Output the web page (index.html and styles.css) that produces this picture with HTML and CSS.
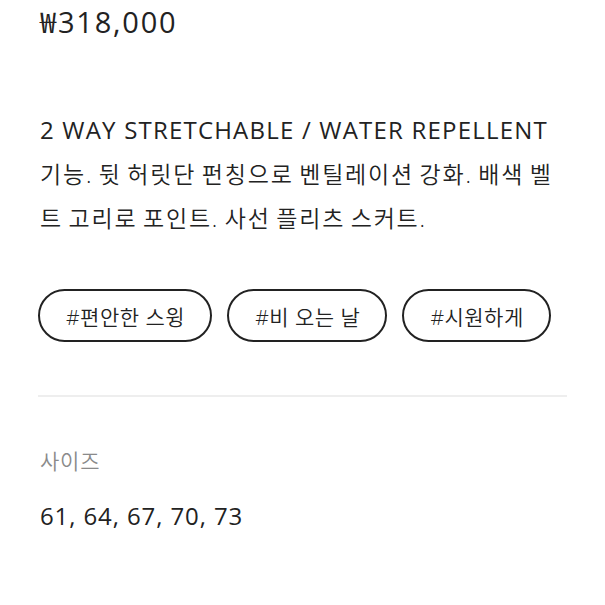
FILE: index.html
```html
<!DOCTYPE html>
<html lang="ko">
<head>
<meta charset="utf-8">
<link rel="stylesheet" href="styles.css">
</head>
<body>
<main class="page">
  <div class="price">₩318,000</div>
  <p class="desc"><span class="en">2 WAY STRETCHABLE / WATER REPELLENT</span> 기능. 뒷 허릿단 펀칭으로 벤틸레이션 강화. 배색 벨트 고리로 포인트. 사선 플리츠 스커트.</p>
  <div class="tags">
    <span class="tag">#편안한 스윙</span>
    <span class="tag">#비 오는 날</span>
    <span class="tag">#시원하게</span>
  </div>
  <hr class="divider">
  <div class="label">사이즈</div>
  <div class="sizes">61, 64, 67, 70, 73</div>
</main>
</body>
</html>
```
FILE: styles.css
```css
html, body {
  margin: 0;
  padding: 0;
  background: #fff;
}
body {
  font-family: "Open Sans", "Noto Sans CJK KR", sans-serif;
  color: #222;
  font-weight: 350;
}
.page {
  padding: 0 38px 0 40px;
}
.price {
  font-size: 29px;
  font-weight: 400;
  letter-spacing: 1.8px;
  line-height: 44px;
  margin: 0;
}
.desc {
  font-size: 23px;
  letter-spacing: 1.8px;
  word-spacing: -2.2px;
  line-height: 44px;
  margin: 64px 0 0 0;
}
.desc .en {
  font-size: 24px;
  font-weight: 400;
  letter-spacing: 1.2px;
  word-spacing: 0;
}
.tags {
  display: flex;
  gap: 15px;
  margin-top: 49px;
  margin-left: -2px;
}
.tag {
  display: inline-flex;
  align-items: center;
  height: 53px;
  box-sizing: border-box;
  padding: 0 25px 0 26px;
  border: 2px solid #222;
  border-radius: 27px;
  font-size: 21px;
  letter-spacing: 0.5px;
}
.divider {
  border: 0;
  border-top: 2px solid #eee;
  margin: 53px 0 0 -2px;
}
.label {
  font-size: 21px;
  color: #8a8a8a;
  letter-spacing: 0.8px;
  line-height: 40px;
  margin-top: 44px;
}
.sizes {
  font-size: 24px;
  font-weight: 400;
  letter-spacing: 0.9px;
  line-height: 40px;
  margin-top: 15px;
}
```
